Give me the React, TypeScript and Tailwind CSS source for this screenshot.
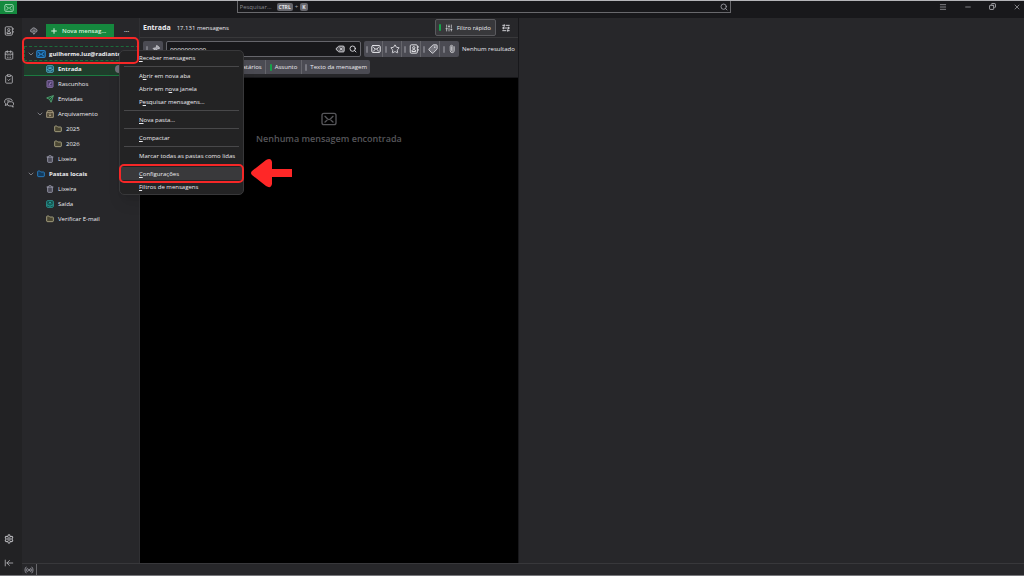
import type { ReactNode } from "react"
import {
  ArrowLeftToLine,
  CalendarDays,
  ChevronDown,
  ClipboardCheck,
  Copy,
  Delete,
  Folder,
  Menu,
  Minus,
  Paperclip,
  Pin,
  Plus,
  Radio,
  Search,
  Send,
  Settings,
  SlidersVertical,
  Star,
  Tag,
  Trash2,
  X,
} from "lucide-react"

function MailIcon({ className }: { className?: string }) {
  return (
    <svg viewBox="0 0 24 20" fill="none" stroke="currentColor" strokeWidth="2" strokeLinejoin="round" strokeLinecap="round" className={className}>
      <rect x="1.5" y="1.5" width="21" height="17" rx="3" />
      <path d="M6 6l4 4q2 1.500 4 0l4-4M6 14.500l3-2.500M18 14.500l-3-2.500" />
    </svg>
  )
}

function CloudIcon({ className }: { className?: string }) {
  return (
    <svg viewBox="0 0 24 24" fill="none" stroke="currentColor" strokeWidth="2.5" strokeLinejoin="round" strokeLinecap="round" className={className}>
      <path d="M7 15H5.500a4 4 0 0 1-.5-8 6.500 6.500 0 0 1 12-1 4.600 4.600 0 0 1 1 9H17" fill="#55555a" />
      <path d="M12 10v11M8 17.500l4 4 4-4" />
    </svg>
  )
}

function ContactIcon({ className }: { className?: string }) {
  return (
    <svg viewBox="0 0 24 24" fill="none" stroke="currentColor" strokeWidth="2.2" className={className}>
      <rect x="3" y="2" width="17" height="20" rx="2.500" />
      <circle cx="11.500" cy="9" r="2.800" />
      <path d="M7 18v-1.500q0-3 4.500-3t4.500 3V18zM22 5v4M22 12v4" />
    </svg>
  )
}

function ChatIcon({ className }: { className?: string }) {
  return (
    <svg viewBox="0 0 24 24" fill="none" stroke="currentColor" strokeWidth="2.2" strokeLinejoin="round" className={className}>
      <path d="M8 16l-5 2 1.500-4A6.500 6.500 0 0 1 8 2h6a6.500 6.500 0 0 1 6 5" />
      <path d="M13 9h4.500a5 5 0 0 1 3.500 9l1 4-4.500-3H13a5 5 0 0 1 0-10z" />
      <path d="M7 7h7" />
    </svg>
  )
}

function DraftIcon({ className }: { className?: string }) {
  return (
    <svg viewBox="0 0 24 24" fill="none" stroke="currentColor" strokeWidth="2.5" className={className}>
      <rect x="3" y="2" width="18" height="20" rx="2" fill="#4b3b66" />
      <path d="M7 17.500h10M9 13.500l1-3 4-4 2 2-4 4z" />
    </svg>
  )
}

function InboxIcon({ className }: { className?: string }) {
  return (
    <svg viewBox="0 0 24 24" fill="none" stroke="currentColor" strokeWidth="2.5" className={className}>
      <rect x="2" y="2" width="20" height="20" rx="3" fill="#1c5468" />
      <path d="M2 14h5l2 4h6l2-4h5M7 7h10M7 10.500h10" />
    </svg>
  )
}

function OutboxIcon({ className }: { className?: string }) {
  return (
    <svg viewBox="0 0 24 24" fill="none" stroke="currentColor" strokeWidth="2.5" className={className}>
      <rect x="2" y="2" width="20" height="20" rx="3" fill="#134e4a" />
      <path d="M2 15h5l2 3h6l2-3h5M8 10l4-4 4 4M12 6v7" />
    </svg>
  )
}

function ArchiveIcon({ className }: { className?: string }) {
  return (
    <svg viewBox="0 0 24 24" fill="none" stroke="currentColor" strokeWidth="2.5" strokeLinejoin="round" className={className}>
      <path d="M2 8l3-6h14l3 6v14H2z" fill="#4a4232" />
      <path d="M2 8h20M12 10v8M8 14.500l4 4 4-4" />
    </svg>
  )
}

function DisplayIcon({ className }: { className?: string }) {
  return (
    <svg viewBox="0 0 24 24" fill="none" stroke="currentColor" strokeWidth="2.5" className={className}>
      <path d="M1 4h6M11 4h12M1 12h22M1 20h12M17 20h6M7 1v7M17 16v7M4 8v8M20 8v8" />
    </svg>
  )
}

type FolderRow = {
  name: string
  icon: ReactNode
  level: "root" | "child" | "parent" | "grandchild"
  state?: "focused" | "selected"
}

const folders: FolderRow[] = [
  { name: "guilherme.luz@radiante", icon: <MailIcon className="h-2 w-2.5 shrink-0 fill-[#123a5c] stroke-3 text-[#2680c8]" />, level: "root", state: "focused" },
  { name: "Entrada", icon: <InboxIcon className="size-2 text-[#58b4cf]" />, level: "child", state: "selected" },
  { name: "Rascunhos", icon: <DraftIcon className="size-2 text-[#9b80bf]" />, level: "child" },
  { name: "Enviadas", icon: <Send className="size-2 fill-[#14532d] stroke-[2.5] text-[#5aa578]" />, level: "child" },
  { name: "Arquivamento", icon: <ArchiveIcon className="size-2 text-[#b5a88a]" />, level: "parent" },
  { name: "2025", icon: <Folder className="size-2 fill-[#4a4632] stroke-[2.5] text-[#b5ae8a]" />, level: "grandchild" },
  { name: "2026", icon: <Folder className="size-2 fill-[#4a4632] stroke-[2.5] text-[#b5ae8a]" />, level: "grandchild" },
  { name: "Lixeira", icon: <Trash2 className="size-2 fill-[#4b4b58] stroke-[2.5] text-[#a1a1b5]" />, level: "child" },
  { name: "Pastas locais", icon: <Folder className="size-2 fill-[#123a5c] stroke-[2.5] text-[#2b87cf]" />, level: "root" },
  { name: "Lixeira", icon: <Trash2 className="size-2 fill-[#4b4b58] stroke-[2.5] text-[#a1a1b5]" />, level: "child" },
  { name: "Saída", icon: <OutboxIcon className="size-2 text-[#2ba3a0]" />, level: "child" },
  { name: "Verificar E-mail", icon: <Folder className="size-2 fill-[#4a4632] stroke-[2.5] text-[#b5ae8a]" />, level: "child" },
]

const indent = {
  root: "pl-[3px] font-bold",
  child: "pl-[22px]",
  parent: "pl-3",
  grandchild: "pl-[30px]",
}

const rowState = {
  focused: "outline-1 -outline-offset-1 outline-dashed outline-[#1d6b3a]",
  selected: "bg-[#1f3d2b] font-bold shadow-[inset_0_-1px_#1c7a40]",
}

function FolderItem({ folder }: { folder: FolderRow }) {
  const expandable = folder.level === "root" || folder.level === "parent"
  return (
    <li
      className={`flex h-[15px] items-center gap-1 overflow-hidden whitespace-nowrap ${indent[folder.level]} ${
        folder.state ? rowState[folder.state] : ""
      }`}
    >
      {expandable && <ChevronDown className="-mr-0.5 size-2 shrink-0 text-[#a1a1aa]" />}
      <span className="flex w-2 shrink-0 justify-center">{folder.icon}</span>
      <a href="#" className="flex-1">{folder.name}</a>
      {folder.state === "selected" && <span className="mr-4 size-2 rounded-full bg-[#71717a]" />}
    </li>
  )
}

// the letter after the "_" is the access key
const menuGroups = [
  ["_Receber mensagens"],
  ["A_brir em nova aba", "Abrir em n_ova janela", "P_esquisar mensagens..."],
  ["_Nova pasta..."],
  ["_Compactar"],
  ["Marcar todas as pastas como lidas"],
  ["_Configurações", "_Filtros de mensagens"],
]

function MenuLabel({ text }: { text: string }) {
  const at = text.indexOf("_")
  if (at < 0) return <>{text}</>
  return (
    <>
      {text.slice(0, at)}
      <u>{text[at + 1]}</u>
      {text.slice(at + 2)}
    </>
  )
}

function ContextMenu() {
  return (
    <div role="menu" className="absolute top-[49px] left-[119px] w-[125px] rounded-[5px] border border-[#38383a] bg-[#232324] pb-px shadow-lg">
      {menuGroups.map((group, i) => (
        <div key={i}>
          {i > 0 && <hr className="mx-1 my-0.5 border-[#48484a]" />}
          {group.map((item) => (
            <button
              key={item}
              role="menuitem"
              className={`flex h-[13px] w-full items-center pl-[19px] whitespace-nowrap ${item === "_Configurações" ? "bg-[#39393b]" : ""}`}
            >
              <span><MenuLabel text={item} /></span>
            </button>
          ))}
        </div>
      ))}
    </div>
  )
}

function Annotations() {
  return (
    <>
      <div className="absolute top-9 left-[22px] h-[27px] w-[117px] rounded-[5px] border-2 border-[#f52727]" />
      <div className="absolute top-[163px] left-[119px] h-[19px] w-[125px] rounded-[5px] border-2 border-[#f52727]" />
      <svg viewBox="0 0 42 30" className="absolute top-[157px] left-[251px] h-[30px] w-[42px]">
        <path d="M1 13 15 2q5-3 6 2v7h20v8H21v7q-1 5-6 2L1 17q-2-2 0-4z" fill="#ff2727" />
      </svg>
    </>
  )
}

function Marker({ on }: { on?: boolean }) {
  return <span className={`h-[7px] w-0.5 shrink-0 rounded-full ${on ? "bg-[#16a34a]" : "bg-[#77777f]"}`} />
}

function TitleBar() {
  return (
    <header className="flex h-[17px] items-start bg-[#18181b]">
      <div className="w-[23.1%]">
        <button aria-label="Correio" className="flex h-[13px] w-[17px] items-center justify-center bg-[#148a3e] text-[#b6e3c5]">
          <MailIcon className="h-2 w-2.5" />
        </button>
      </div>
      <label className="flex h-[12px] w-[48.3%] items-center gap-0.5 border border-t-0 border-[#68686c] px-0.5 text-[#a1a1aa]">
        <input type="text" aria-label="Pesquisar" placeholder="Pesquisar..." className="w-[35px] bg-transparent outline-none placeholder:text-[#8a8a90]" />
        <kbd className="rounded-[2px] bg-[#66666c] px-0.5 font-[inherit] text-[5px] leading-[8px] font-bold text-[#e4e4e8]">CTRL</kbd>
        <span>+</span>
        <kbd className="rounded-[2px] bg-[#66666c] px-0.5 font-[inherit] text-[5px] leading-[8px] font-bold text-[#e4e4e8]">K</kbd>
        <Search className="ml-auto size-2 stroke-[2.5]" />
      </label>
      <div className="flex h-[11px] flex-1 items-center justify-end gap-[17px] pr-[3px] text-[#b4b4b8]">
        <button aria-label="Menu"><Menu className="size-2" /></button>
        <button aria-label="Minimizar"><Minus className="size-2" /></button>
        <button aria-label="Restaurar"><Copy className="size-[7px] -scale-x-100 stroke-3" /></button>
        <button aria-label="Fechar"><X className="size-2" /></button>
      </div>
    </header>
  )
}

function SpacesRail() {
  return (
    <nav className="flex w-[22px] shrink-0 flex-col items-start gap-[14px] bg-[#222224] pt-2 pb-[7px] pl-1 text-[#b4b4b8]">
      <button aria-label="Catálogo"><ContactIcon className="size-2.5" /></button>
      <button aria-label="Agenda"><CalendarDays className="size-2.5" /></button>
      <button aria-label="Tarefas"><ClipboardCheck className="size-2.5" /></button>
      <button aria-label="Bate-papo"><ChatIcon className="size-2.5" /></button>
      <button aria-label="Configurações" className="mt-auto"><Settings className="size-2.5 stroke-[2.5]" /></button>
      <button aria-label="Recolher"><ArrowLeftToLine className="size-2.5" /></button>
    </nav>
  )
}

function FolderPane() {
  return (
    <aside className="w-[118px] shrink-0 border-r border-[#303033]">
      <div className="flex h-7 items-center pb-0.5 pl-2">
        <button aria-label="Receber mensagens"><CloudIcon className="size-2 text-[#a1a1aa]" /></button>
        <button className="ml-2 flex h-[14px] w-[68px] items-center gap-1 bg-[#15883e] pl-1 font-semibold text-[#d6f0de]">
          <Plus className="size-2 stroke-3" />
          Nova mensag...
        </button>
        <button aria-label="Mais opções" className="ml-2.5 font-bold">···</button>
      </div>
      <ul className="ml-0.5">
        {folders.map((folder, i) => (
          <FolderItem key={i} folder={folder} />
        ))}
      </ul>
    </aside>
  )
}

const quickFilters = [
  { label: "Não lidas", icon: <MailIcon className="h-2 w-2.5 stroke-[2.5]" /> },
  { label: "Com estrela", icon: <Star className="size-2.5" /> },
  { label: "Contato", icon: <ContactIcon className="size-2.5" /> },
  { label: "Etiquetas", icon: <Tag className="size-2.5 -scale-x-100 fill-[#77777f]" /> },
  { label: "Anexo", icon: <Paperclip className="size-2 -rotate-45" /> },
]

function MessagePane() {
  return (
    <main className="flex w-[37.7%] shrink-0 flex-col bg-black">
      <div className="flex h-5 items-center border-b border-[#38383a] bg-[#27272a] pr-2 pl-[3px]">
        <h1 className="text-[7px] font-bold">Entrada</h1>
        <span className="ml-1.5">17.131 mensagens</span>
        <button className="ml-auto flex h-[17px] w-[61px] items-center gap-1 rounded-[2px] border border-[#5a5a5e] bg-[#38383b] pl-[3px]">
          <Marker on />
          <SlidersVertical className="size-2" />
          Filtro rápido
        </button>
        <button aria-label="Opções de exibição" className="ml-1.5"><DisplayIcon className="size-2" /></button>
      </div>
      <div className="border-b border-[#18181b] bg-[#27272a] py-[3px] pr-[3px] pl-[3px]">
        <div className="flex items-center gap-[3px]">
          <button aria-label="Manter filtro" className="flex h-4 w-5 items-center justify-center gap-1 rounded-[2px] bg-[#4b4b53]">
            <Marker />
            <Pin className="size-2 rotate-45 fill-[#a1a1aa]" />
          </button>
          <label className="flex h-4 min-w-0 flex-1 items-center gap-1 rounded-[2px] border border-[#65656b] bg-[#18181b] px-[3px]">
            <input aria-label="Filtrar mensagens" defaultValue="oooooooooo" className="min-w-0 flex-1 bg-transparent outline-none" />
            <Delete className="size-2.5 fill-[#55555a]" />
            <Search className="size-2 stroke-[2.5]" />
          </label>
          <div className="flex h-4 divide-x divide-[#65656b] overflow-hidden rounded-[2px] bg-[#4b4b53]">
            {quickFilters.map((f) => (
              <button key={f.label} aria-label={f.label} className="flex w-[19px] items-center justify-center gap-[3px]">
                <Marker />
                {f.icon}
              </button>
            ))}
          </div>
          <span className="whitespace-nowrap">Nenhum resultado</span>
        </div>
        <div className="mt-[3px] flex h-[14px] w-[227px] justify-end divide-x divide-[#65656b] overflow-hidden rounded-[2px] bg-[#4b4b53]">
          <button className="flex items-center gap-[3px] px-[3px]"><Marker />Remetente</button>
          <button className="flex items-center gap-[3px] px-[3px]"><Marker />Destinatários</button>
          <button className="flex items-center gap-[3px] px-1"><Marker on />Assunto</button>
          <button className="flex items-center gap-[3px] px-[3px]"><Marker />Texto da mensagem</button>
        </div>
      </div>
      <div className="flex flex-col items-center gap-[5px] pt-[34px] text-[#56565a]">
        <MailIcon className="h-[14px] w-4" />
        <p className="text-[9px] leading-[16px] font-semibold">Nenhuma mensagem encontrada</p>
      </div>
    </main>
  )
}

export default function App() {
  return (
    <div className="relative flex h-screen flex-col overflow-hidden border-t border-b border-t-[#b4b4b8] border-b-[#77777b] bg-[#27272a] font-['Open_Sans',sans-serif] text-[6px] leading-[8px] font-medium text-[#ececf0]">
      <TitleBar />
      <div className="flex min-h-0 flex-1">
        <SpacesRail />
        <div className="flex min-w-0 flex-1 flex-col">
          <div className="flex min-h-0 flex-1">
            <FolderPane />
            <MessagePane />
            <section aria-label="Mensagem" className="flex-1 border-l border-[#18181b]" />
          </div>
          <footer className="flex h-[12px] items-center border-t border-[#38383b] pl-0.5">
            <Radio className="size-2.5 text-[#a1a1aa]" />
            <span className="ml-0.5 h-full border-l border-[#68686c]" />
          </footer>
        </div>
      </div>
      <ContextMenu />
      <Annotations />
    </div>
  )
}
